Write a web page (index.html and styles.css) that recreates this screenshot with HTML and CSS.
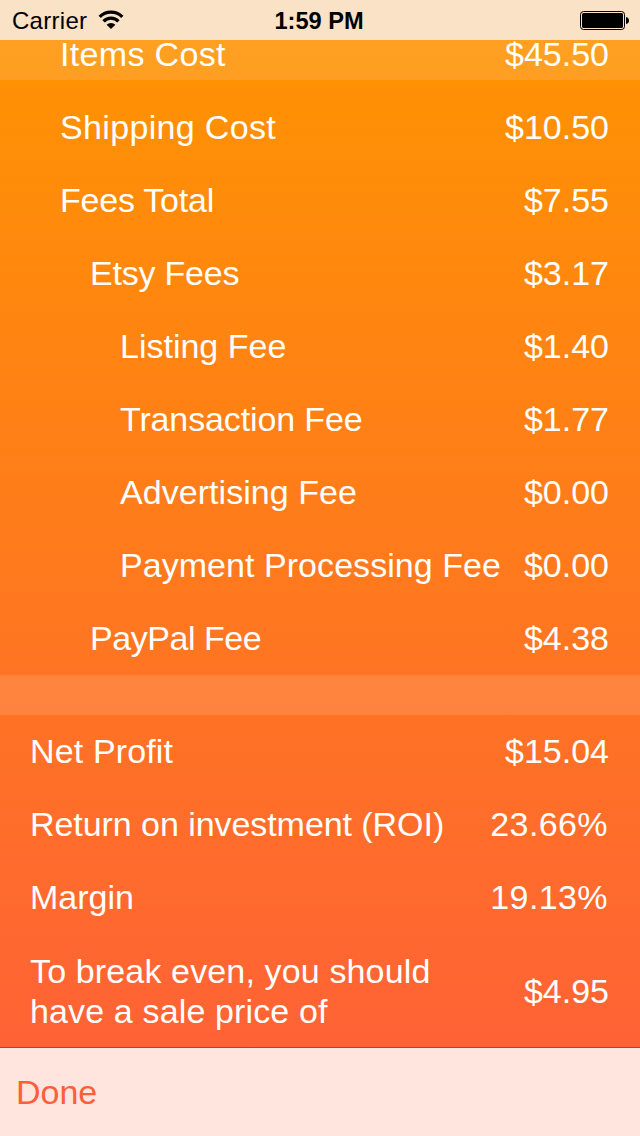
FILE: index.html
```html
<!DOCTYPE html>
<html lang="en">
<head>
<meta charset="utf-8">
<title>Profit summary</title>
<link rel="stylesheet" href="styles.css">
</head>
<body>
<div class="screen">
  <header class="status">
    <div class="carrier"><span class="carrier-name">Carrier</span>
      <svg class="wifi" width="26" height="20" viewBox="0 0 26 20"><g fill="none" stroke="#000" stroke-width="3.3"><path d="M1.7 6.8A16 16 0 0 1 24.3 6.8"/><path d="M5.6 11.4A10.2 10.2 0 0 1 20.4 11.4"/></g><path d="M13 19L8.6 14.8A6 6 0 0 1 17.4 14.8Z"/></svg>
    </div>
    <div class="time">1:59 PM</div>
    <div class="battery"><svg width="49" height="19" viewBox="0 0 49 19"><rect x=".5" y=".5" width="44" height="18" rx="3" fill="none" stroke="#000"/><rect x="2" y="2" width="41" height="15" rx="1.5"/><path d="M46 6Q49 6.5 49 9.5T46 13Z"/></svg></div>
  </header>
  <main class="list">
    <section class="group">
      <div class="row l1 first"><span class="label wider">Items Cost</span><span class="value">$45.50</span></div>
      <div class="row l1"><span class="label wider">Shipping Cost</span><span class="value">$10.50</span></div>
      <div class="row l1"><span class="label tight">Fees Total</span><span class="value">$7.55</span></div>
      <div class="row l2"><span class="label tight">Etsy Fees</span><span class="value">$3.17</span></div>
      <div class="row l3"><span class="label">Listing Fee</span><span class="value">$1.40</span></div>
      <div class="row l3"><span class="label snug">Transaction Fee</span><span class="value">$1.77</span></div>
      <div class="row l3"><span class="label loose">Advertising Fee</span><span class="value">$0.00</span></div>
      <div class="row l3"><span class="label loose">Payment Processing Fee</span><span class="value">$0.00</span></div>
      <div class="row l2"><span class="label tighter">PayPal Fee</span><span class="value">$4.38</span></div>
    </section>
    <div class="divider"></div>
    <section class="group">
      <div class="row"><span class="label wide">Net Profit</span><span class="value">$15.04</span></div>
      <div class="row"><span class="label roi">Return on investment (ROI)</span><span class="value percent">23.66%</span></div>
      <div class="row"><span class="label">Margin</span><span class="value percent">19.13%</span></div>
      <div class="row tall"><span class="label wide">To break even, you should<br>have a sale price of</span><span class="value">$4.95</span></div>
    </section>
  </main>
  <footer class="toolbar"><span class="done">Done</span></footer>
</div>
</body>
</html>
```
FILE: styles.css
```css
body { margin: 0; }
.screen {
  width: 640px;
  height: 1136px;
  display: flex;
  flex-direction: column;
  overflow: hidden;
  font-family: "Liberation Sans", Arial, sans-serif;
  background: linear-gradient(#ff9500, #ff5e3a);
}
.status {
  height: 40px;
  flex: none;
  box-sizing: border-box;
  padding: 0 11px 0 12px;
  display: grid;
  grid-template-columns: 1fr auto 1fr;
  align-items: center;
  background: #f9e2c6;
  color: #000;
  font-size: 24px;
}
.carrier { display: flex; align-items: center; gap: 11px; }
.carrier-name { letter-spacing: .28px; padding-top: 1px; }
.wifi { display: block; }
.time { font-size: 23.6px; font-weight: bold; padding: 3px 3px 0 0; }
.battery { display: flex; justify-content: flex-end; padding-top: 1px; }
.list { flex: 1; color: #fff; font-size: 34px; }
.row {
  height: 73px;
  box-sizing: border-box;
  padding: 0 31px 2px 30px;
  display: flex;
  align-items: center;
  justify-content: space-between;
  line-height: 40px;
  white-space: nowrap;
}
.row.l1 { padding-left: 60px; }
.row.l2 { padding-left: 90px; }
.row.l3 { padding-left: 120px; }
/* Scrolled row under the translucent 40px section header */
.row.first {
  height: 51px;
  padding-bottom: 24px;
  background: linear-gradient(rgba(255,255,255,.12), rgba(255,255,255,.12)) 0 0 / 100% 40px no-repeat;
}
.wider { letter-spacing: .34px; }
.wide { letter-spacing: .14px; }
.loose { letter-spacing: .05px; }
.roi { letter-spacing: -.06px; }
.snug { letter-spacing: -.13px; }
.tight { letter-spacing: -.22px; }
.tighter { letter-spacing: -.45px; }
.percent { letter-spacing: .4px; padding-right: 1px; }
.divider { height: 40px; background: rgba(255,255,255,.12); }
.row.tall { height: 113px; padding-bottom: 0; }
.toolbar {
  height: 89px;
  flex: none;
  box-sizing: border-box;
  border-top: 1px solid #b5432a;
  background: #ffe5dd;
  display: flex;
  align-items: center;
  padding-left: 16px;
  color: #ff5e3a;
  font-size: 34px;
}
```
